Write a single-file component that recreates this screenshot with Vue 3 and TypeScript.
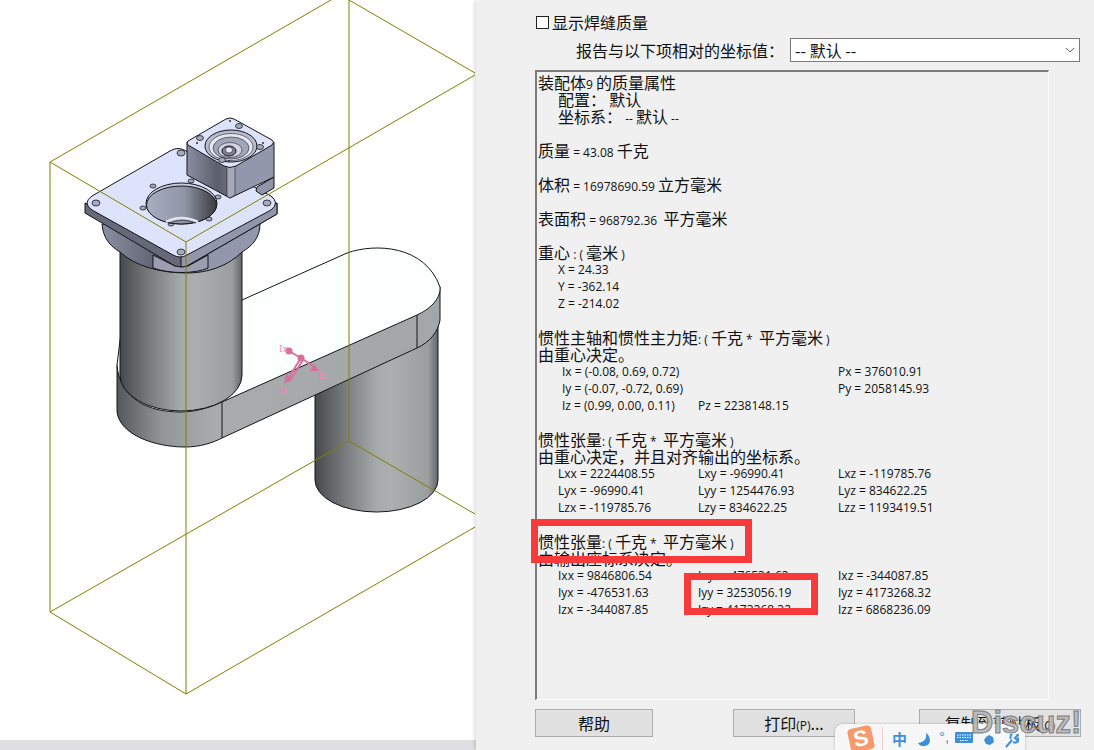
<script setup lang="ts">
type Row = { text?: string; indent?: boolean; cols?: string[]; inset?: boolean }

const rows: Row[] = [
  { text: '装配体9 的质量属性' },
  { text: '配置： 默认', indent: true },
  { text: '坐标系： -- 默认 --', indent: true },
  { text: '' },
  { text: '质量 = 43.08 千克' },
  { text: '' },
  { text: '体积 = 16978690.59 立方毫米' },
  { text: '' },
  { text: '表面积 = 968792.36  平方毫米' },
  { text: '' },
  { text: '重心 : ( 毫米 )' },
  { text: 'X = 24.33', indent: true },
  { text: 'Y = -362.14', indent: true },
  { text: 'Z = -214.02', indent: true },
  { text: '' },
  { text: '惯性主轴和惯性主力矩: ( 千克 *  平方毫米 )' },
  { text: '由重心决定。' },
  { cols: ['Ix = (-0.08, 0.69, 0.72)', '', 'Px = 376010.91'], inset: true },
  { cols: ['Iy = (-0.07, -0.72, 0.69)', '', 'Py = 2058145.93'], inset: true },
  { cols: ['Iz = (0.99, 0.00, 0.11)', 'Pz = 2238148.15', ''], inset: true },
  { text: '' },
  { text: '惯性张量: ( 千克 *  平方毫米 )' },
  { text: '由重心决定，并且对齐输出的坐标系。' },
  { cols: ['Lxx = 2224408.55', 'Lxy = -96990.41', 'Lxz = -119785.76'] },
  { cols: ['Lyx = -96990.41', 'Lyy = 1254476.93', 'Lyz = 834622.25'] },
  { cols: ['Lzx = -119785.76', 'Lzy = 834622.25', 'Lzz = 1193419.51'] },
  { text: '' },
  { text: '惯性张量: ( 千克 *  平方毫米 )' },
  { text: '由输出座标系决定。' },
  { cols: ['Ixx = 9846806.54', 'Ixy = -476531.63', 'Ixz = -344087.85'] },
  { cols: ['Iyx = -476531.63', 'Iyy = 3253056.19', 'Iyz = 4173268.32'] },
  { cols: ['Izx = -344087.85', 'Izy = 4173268.32', 'Izz = 6868236.09'] }
]

interface Seg { s: string; cjk: boolean }
function segs(t: string): Seg[] {
  return t
    .split(/([\u3000-\u9fff\uff00-\uffef]+)/)
    .filter((s) => s.length > 0)
    .map((s) => ({ s, cjk: /[\u3000-\u9fff\uff00-\uffef]/.test(s) }))
}

const plateHoles: number[][] = [[96, 203], [181, 153], [267, 203], [181, 252]]
const smallHoles: number[][] = [[153, 186], [191, 181], [218, 197], [209, 219], [171, 224], [143, 208]]
const motorHoles: number[][] = [[200, 138], [239, 126], [260, 147], [222, 160]]
const motorPins: number[][] = [[197, 143], [230, 121], [263, 143], [229, 161]]
</script>

<template>
  <div class="screen">
    <section class="canvas">
      <svg class="model" width="476" height="740" viewBox="0 0 476 740">
        <defs>
          <linearGradient id="cylA" x1="0" x2="1" y1="0" y2="0">
            <stop offset="0" stop-color="#47494b" />
            <stop offset="0.22" stop-color="#74777a" />
            <stop offset="0.5" stop-color="#a6aaab" />
            <stop offset="0.62" stop-color="#abafb0" />
            <stop offset="0.92" stop-color="#9a9e9f" />
            <stop offset="1" stop-color="#63666a" />
          </linearGradient>
          <linearGradient id="armG" x1="0" x2="1" y1="0" y2="0">
            <stop offset="0" stop-color="#55585a" />
            <stop offset="0.14" stop-color="#929698" />
            <stop offset="0.3" stop-color="#a8acad" />
            <stop offset="1" stop-color="#a2a6a7" />
          </linearGradient>
          <linearGradient id="boreG" x1="0" x2="1" y1="0" y2="0">
            <stop offset="0" stop-color="#a8adc0" />
            <stop offset="0.55" stop-color="#8f94a6" />
            <stop offset="0.85" stop-color="#55575f" />
            <stop offset="1" stop-color="#3c3d42" />
          </linearGradient>
          <linearGradient id="darkFace" x1="0" x2="1" y1="0" y2="0">
            <stop offset="0" stop-color="#8a8ea2" />
            <stop offset="0.7" stop-color="#5c606d" />
            <stop offset="1" stop-color="#6a6e7c" />
          </linearGradient>
        </defs>

        <!-- lower column -->
        <path class="edge" fill="url(#cylA)" d="M315,380 V480 A61.500,32 0 0 0 438,480 V310 Z" />

        <!-- arm -->
        <path class="edge" fill="url(#armG)" d="M117,365 V412 C120,435 155,447 185,447 C200,447 212,443 222,438 L417,348 C430,342 438,332 440,320 V287 L300,300 Z" />
        <path class="edge" fill="#fbfffe" d="M242,300 L347,253 C375,243 425,245 440,287 C441,300 428,310 417,315 L222,402 C205,410 190,412 180,412 C150,412 120,400 117,365 L125,300 Z" />
        <path class="edge" d="M222,402 V438 M417,315 V348" fill="none" />

        <!-- upper column -->
        <path class="edge" fill="url(#cylA)" d="M120,245 V375 A61,36 0 0 0 242,375 V245 Z" />

        <!-- mount under plate -->
        <path class="edge" fill="url(#darkFace)" d="M102,224 C103,238 110,246 120,252 C135,266 160,273 187,273 V262 L130,225 Z" />
        <path class="edge" fill="#9397ab" d="M260,224 C260,238 252,246 242,252 C228,266 208,273 187,273 V262 L230,225 Z" />
        <path class="edge" fill="#9a9eb0" d="M153,255 L175,266 H188 L208,255 V268 C195,274 170,274 153,268 Z" />

        <!-- plate -->
        <path class="edge" fill="#65697a" d="M85,203 V213 L175,266 Q181,268 187,266 L277,214 V203 L181,250 Z" />
        <path class="edge" fill="#9196aa" d="M181,256 V267 Q184,267 187,266 L277,214 V203 Z" />
        <path class="edge" fill="#dde3fb" d="M92,196 L170,151 Q178,146 186,151 L271,196 Q280,203 271,210 L187,255 Q180,259 173,255 L92,210 Q82,203 92,196 Z" />

        <ellipse v-for="(h, i) in plateHoles" :key="'p' + i" class="hole" :cx="h[0]" :cy="h[1]" rx="4" ry="3" />
        <ellipse v-for="(h, i) in smallHoles" :key="'s' + i" class="hole" :cx="h[0]" :cy="h[1]" rx="3" ry="2" />

        <!-- bore -->
        <ellipse class="edge" cx="181.500" cy="203.500" rx="35.500" ry="20.500" fill="#c8cde0" />
        <ellipse class="edge" cx="181.500" cy="205" rx="35" ry="19" fill="url(#boreG)" />
        <path d="M166,222 Q181,214 198,222" fill="none" stroke="#e2e5ef" stroke-width="2.500" />
        <path d="M168,224 Q181,217 196,223" fill="none" stroke="#3d3f46" stroke-width="0.800" />

        <!-- motor -->
        <path class="edge" fill="#8f94a8" d="M257,187 L274,177 V188 L262,195 L256,191 Z" />
        <path class="edge" fill="url(#darkFace)" d="M187,142 V175 L230,198 V167 Z" />
        <path class="edge" fill="#9397ab" d="M230,167 V198 L274,177 V142 Z" />
        <path class="thin" fill="#a5a9bb" d="M227,166 H235 V195 L230,198 L227,196 Z" />
        <path class="edge" fill="#dde3fb" d="M188,141 L226,119 Q230,117 234,119 L272,140 Q275,142 272,145 L236,166 Q230,169 224,166 L188,145 Q186,143 188,141 Z" />
        <ellipse class="edge" cx="231" cy="146" rx="26" ry="16" fill="#b8bccd" />
        <ellipse class="thin" cx="231" cy="147" rx="22" ry="13.500" fill="#e4e7f4" />
        <ellipse class="thin" cx="231" cy="148" rx="18" ry="11" fill="#a2a6b9" />
        <ellipse class="thin" cx="230" cy="150" rx="12" ry="7.500" fill="#cfd3e2" />
        <ellipse class="edge" cx="229" cy="151" rx="7" ry="5" fill="#7d8192" />
        <ellipse class="thin" cx="229" cy="150" rx="3.500" ry="3" fill="#e7e9f2" />
        <ellipse v-for="(h, i) in motorHoles" :key="'m' + i" class="hole" :cx="h[0]" :cy="h[1]" rx="3.500" ry="2.500" />
        <circle v-for="(h, i) in motorPins" :key="'n' + i" :cx="h[0]" :cy="h[1]" r="1" fill="#2b2b33" />

        <!-- bounding box -->
        <g class="box">
          <path d="M50,162 L331,0 M50,162 L186,242 L475,75 M349,0 L475,73" />
          <path d="M50,162 V612 M186,242 V694 M349,0 V441" />
          <path d="M50,612 L349,441 L475,514 M50,612 L186,694 L475,527" />
        </g>

        <!-- principal axes -->
        <g class="triad">
          <path d="M301,358 L289,351 M301,358 L316,368 M301,358 L287,380" />
          <path d="M303,360 L289,382" stroke="#f5bcd4" />
          <circle cx="289" cy="351" r="3.500" />
          <circle cx="301" cy="358" r="3.500" />
          <polygon points="319,371 310,371 314,364" />
          <polygon points="284,384 286,374 293,378" />
          <text x="279" y="352">Ix</text>
          <text x="318" y="379">Iz</text>
          <text x="279" y="393">Iy</text>
        </g>
      </svg>
      <div class="scroll-strip"></div>
    </section>

    <section class="panel">
      <label class="check-row">
        <span class="check"></span>
        <span>显示焊缝质量</span>
      </label>

      <div class="select-row">
        <span>报告与以下项相对的坐标值：</span>
        <div class="select">
          <span>-- 默认 --</span>
          <svg width="10" height="6" viewBox="0 0 10 6"><path d="M1,1 L5,5 L9,1" fill="none" stroke="#5f5f5f" /></svg>
        </div>
      </div>

      <div class="report">
        <template v-for="(r, i) in rows" :key="i">
          <div v-if="r.cols" class="ln grid" :class="{ inset: r.inset }">
            <span v-for="(c, j) in r.cols" :key="j">{{ c }}</span>
          </div>
          <div v-else class="ln" :class="{ indent: r.indent }">
            <span v-for="(p, j) in segs(r.text || '')" :key="j" :class="{ cjk: p.cjk }">{{ p.s }}</span>
          </div>
        </template>
      </div>

      <div class="buttons">
        <button class="btn help">帮助</button>
        <button class="btn print">打印<small>(P)</small>...</button>
        <button class="btn copy">复制到剪贴板<small>(C)</small></button>
      </div>
    </section>

    <div class="mark mark-a"></div>
    <div class="mark mark-b"><i></i></div>

    <div class="ime">
      <span class="ime-logo">S</span>
      <span class="ime-div"></span>
      <span class="ime-zh">中</span>
      <svg width="14" height="16" viewBox="0 0 14 16"><path d="M9,1 C10,6 8,10 1,11 C4,16 12,15 13,9 C13,5 11,2 9,1 Z" fill="#3f8fd8" /></svg>
      <span class="ime-punc">°,</span>
      <svg width="18" height="11" viewBox="0 0 18 11">
        <rect width="18" height="11" rx="1" fill="#3f8fd8" />
        <path d="M2,3 H16 M2,5.500 H16 M5,8.500 H13" stroke="#fff" stroke-dasharray="1.500 1" />
      </svg>
      <svg class="ime-blob" width="10" height="10" viewBox="0 0 10 10"><path d="M5,0 L9,2 L10,7 L6,10 L2,9 L0,5 L2,2 Z" fill="#3f8fd8" /></svg>
      <svg class="ime-tool" width="14" height="14" viewBox="0 0 14 14"><path d="M1,13 L7,6 M6,5 A4,4 0 0 1 13,1 L10,4 L12,6 L14,4 A4,4 0 0 1 8,8" fill="none" stroke="#3f8fd8" stroke-width="2" /></svg>
    </div>

    <div class="discuz">Discuz!</div>
  </div>
</template>

<style scoped>
.screen {
  position: relative;
  display: flex;
  width: 1094px;
  height: 750px;
  overflow: hidden;
  background: #fff;
}
.canvas {
  width: 476px;
  flex: none;
  display: flex;
  flex-direction: column;
  background: #fff;
}
.model { display: block; flex: none; }
.edge { stroke: #14151a; stroke-width: 1; stroke-linejoin: round; }
.thin { stroke: #22232a; stroke-width: 0.6; }
.hole { fill: #a6aabd; stroke: #1c1c22; stroke-width: 0.8; }
.box path { fill: none; stroke: #808000; stroke-width: 1; }
.triad path { stroke: #d96f9f; stroke-width: 2; fill: none; }
.triad circle, .triad polygon { fill: #d66f9c; }
.triad text {
  font-family: "DejaVu Serif", serif;
  font-size: 9px;
  fill: #f285b8;
}
.scroll-strip { flex: 1; background: #dfdfe3; }

.panel {
  flex: 1;
  min-width: 0;
  display: flex;
  flex-direction: column;
  padding: 12px 13px 13px 59px;
  background: #f0f0f0;
  box-shadow: -3px 0 3px -1px rgba(0, 0, 0, 0.12);
  font-family: "Noto Sans CJK SC", "Noto Sans", sans-serif;
  font-size: 16px;
  color: #111;
}
.check-row {
  display: flex;
  align-items: center;
  gap: 3px;
  height: 20px;
  padding-left: 1px;
  line-height: 20px;
}
.check {
  width: 11px;
  height: 11px;
  border: 1px solid #222;
  background: #fff;
}
.select-row {
  display: flex;
  align-items: center;
  justify-content: space-between;
  height: 24px;
  margin-top: 6px;
  padding-left: 41px;
  margin-right: 1px;
}
.select {
  width: 290px;
  height: 24px;
  box-sizing: border-box;
  display: flex;
  align-items: center;
  justify-content: space-between;
  padding: 0 4px 0 4px;
  background: #fff;
  border: 1px solid #7a7a7a;
}
.report {
  width: 514px;
  height: 630px;
  box-sizing: border-box;
  margin-top: 8px;
  padding: 2px 0 0 1px;
  border-style: solid;
  border-width: 2px 1px 1px 2px;
  border-color: #7c7c7c #fbfbfb #fbfbfb #7c7c7c;
  font-family: "Open Sans", "Noto Sans CJK SC", sans-serif;
  font-size: 12px;
  overflow: hidden;
}
.ln {
  height: 17px;
  line-height: 17px;
  white-space: pre;
}
.cjk {
  font-family: "Noto Sans CJK SC", sans-serif;
  font-size: 16px;
}
.indent { padding-left: 20px; }
.grid {
  display: grid;
  grid-template-columns: 140px 140px 140px;
  padding-left: 20px;
}
.inset span:first-child { padding-left: 4px; }

.buttons {
  display: flex;
  margin-top: 9px;
}
.btn {
  height: 28px;
  padding: 0;
  font-family: "Noto Sans CJK SC", sans-serif;
  font-size: 16px;
  color: #111;
  background: #e1e1e1;
  border: 1px solid #adadad;
}
.btn small {
  font-family: "Open Sans", sans-serif;
  font-size: 12px;
}
.help { width: 118px; }
.print { width: 122px; margin-left: 80px; }
.copy { width: 162px; margin-left: 64px; }

.mark {
  position: absolute;
  box-sizing: border-box;
  border: 7px solid #f93a3a;
}
.mark-a { left: 531px; top: 519px; width: 221px; height: 44px; }
.mark-b { left: 684px; top: 573px; width: 134px; height: 42px; }
.mark-b i {
  position: absolute;
  right: 0;
  top: 0;
  bottom: 0;
  width: 1px;
  background: #fff;
}

.ime {
  position: absolute;
  left: 835px;
  top: 724px;
  width: 190px;
  height: 32px;
  box-sizing: border-box;
  display: flex;
  align-items: flex-start;
  padding: 6px 0 0 57px;
  gap: 7px;
  background: #f7f7f7;
  border-radius: 8px;
  box-shadow: 0 0 3px rgba(0, 0, 0, 0.25);
  font-family: "Noto Sans CJK SC", sans-serif;
  color: #3f8fd8;
}
.ime-logo {
  position: absolute;
  left: 14px;
  top: 3px;
  width: 24px;
  height: 24px;
  border-radius: 4px;
  transform: rotate(-12deg);
  background: #f59a6b;
  color: #fff;
  text-align: center;
  font: bold 22px/24px "Liberation Sans", sans-serif;
}
.ime-div {
  position: absolute;
  left: 47px;
  top: 3px;
  bottom: 0;
  width: 1px;
  background: #f3cfcf;
}
.ime-zh { font-size: 15px; font-weight: 700; line-height: 18px; margin-right: 3px; }
.ime-punc { font: 15px/14px "Liberation Sans", sans-serif; margin: 0 -1px 0 1px; }
.ime > svg { margin-top: 2px; }
.ime > .ime-blob { margin-top: 5px; margin-left: 4px; }
.ime > .ime-tool { margin-top: 4px; margin-left: 4px; }

.discuz {
  position: absolute;
  left: 971px;
  top: 705px;
  font: bold 31px/36px "Liberation Sans", sans-serif;
  color: rgba(176, 176, 176, 0.85);
  -webkit-text-stroke: 1px #7d7d7d;
  text-shadow: 1px 1px 0 rgba(255, 255, 255, 0.8);
}
</style>
